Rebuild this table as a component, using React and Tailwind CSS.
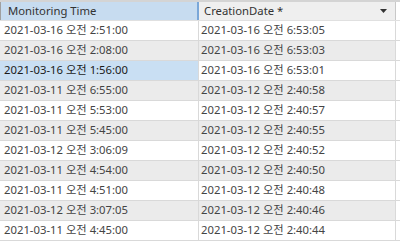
const rows = [
  ['2021-03-16 오전 2:51:00', '2021-03-16 오전 6:53:05'],
  ['2021-03-16 오전 2:08:00', '2021-03-16 오전 6:53:03'],
  ['2021-03-16 오전 1:56:00', '2021-03-16 오전 6:53:01'],
  ['2021-03-11 오전 6:55:00', '2021-03-12 오전 2:40:58'],
  ['2021-03-11 오전 5:53:00', '2021-03-12 오전 2:40:57'],
  ['2021-03-11 오전 5:45:00', '2021-03-12 오전 2:40:55'],
  ['2021-03-12 오전 3:06:09', '2021-03-12 오전 2:40:52'],
  ['2021-03-11 오전 4:54:00', '2021-03-12 오전 2:40:50'],
  ['2021-03-11 오전 4:51:00', '2021-03-12 오전 2:40:48'],
  ['2021-03-12 오전 3:07:05', '2021-03-12 오전 2:40:46'],
  ['2021-03-11 오전 4:45:00', '2021-03-12 오전 2:40:44'],
];

export default function App() {
  return (
    <div
      className="w-[400px] h-[241px] overflow-hidden bg-white text-[11.3px] text-[#444]"
      style={{ fontFamily: '"Noto Sans", "Noto Sans CJK KR", sans-serif' }}
    >
      {/* top strip */}
      <div className="h-[2px] bg-[#d4d4d4]" />
      {/* header */}
      <div className="flex h-[19px] border-b border-[#e0e0e0]">
        <div className="w-[199px] bg-[#c7dcf0] border-l border-[#a0a0a0] border-r-2 border-r-[#7aa7d8] pl-[7px] flex items-center text-[#333]">
          Monitoring Time
        </div>
        <div className="w-[197px] bg-[#efefef] border-r border-[#c8c8c8] pl-[5px] pr-[8px] flex items-center justify-between text-[#333]">
          <span>CreationDate *</span>
          <svg width="7" height="4" viewBox="0 0 7 4">
            <path d="M0 0h7L3.5 4z" fill="#333" />
          </svg>
        </div>
        <div className="flex-1" />
      </div>
      {rows.map((r, i) => {
        const bg = i % 2 === 1 ? 'bg-[#ebebeb]' : 'bg-white';
        return (
          <div key={i} className="flex h-[20px] border-b border-[#d9d9d9]">
            <div
              className={`w-[199px] pl-[4px] flex items-center border-r border-[#d9d9d9] ${
                i === 2 ? 'bg-[#c9dff3] text-[#1a1a1a]' : bg
              }`}
            >
              {r[0]}
            </div>
            <div className={`w-[197px] pl-[2px] flex items-center border-r border-[#d9d9d9] ${bg}`}>
              {r[1]}
            </div>
            <div className="flex-1 bg-white" />
          </div>
        );
      })}
    </div>
  );
}
